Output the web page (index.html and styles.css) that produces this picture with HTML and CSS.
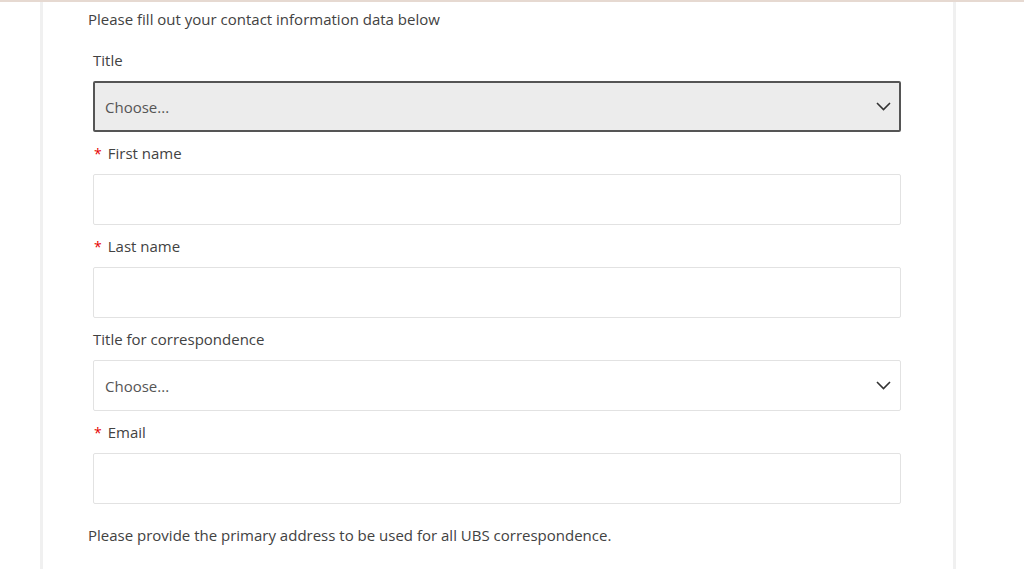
FILE: index.html
```html
<!DOCTYPE html>
<html lang="en">
<head>
<meta charset="utf-8">
<title>Contact information</title>
<link rel="stylesheet" href="styles.css">
</head>
<body>
<div class="topline"></div>
<main class="card">
  <p class="intro">Please fill out your contact information data below</p>
  <form class="form">
    <div class="group">
      <label class="label">Title</label>
      <div class="select select-active">
        <span class="select-text">Choose...</span>
        <svg class="chevron" width="15" height="9" viewBox="0 0 15 9"><path d="M1 1l6.5 6.5L14 1" fill="none" stroke="#333" stroke-width="1.6"/></svg>
      </div>
    </div>
    <div class="group">
      <label class="label"><span class="req">*</span>First name</label>
      <div class="input"></div>
    </div>
    <div class="group">
      <label class="label"><span class="req">*</span>Last name</label>
      <div class="input"></div>
    </div>
    <div class="group">
      <label class="label">Title for correspondence</label>
      <div class="select">
        <span class="select-text">Choose...</span>
        <svg class="chevron" width="15" height="9" viewBox="0 0 15 9"><path d="M1 1l6.5 6.5L14 1" fill="none" stroke="#333" stroke-width="1.6"/></svg>
      </div>
    </div>
    <div class="group">
      <label class="label"><span class="req">*</span>Email</label>
      <div class="input"></div>
    </div>
  </form>
  <p class="note">Please provide the primary address to be used for all UBS correspondence.</p>
</main>
</body>
</html>
```
FILE: styles.css
```css
html, body {
  margin: 0;
  padding: 0;
  background: #fff;
  height: 100%;
  overflow: hidden;
}
body {
  font-family: "Open Sans", "Noto Sans", sans-serif;
  font-size: 15px;
  color: #424242;
}
.topline {
  height: 2px;
  background: #e6d9d1;
}
.card {
  margin-left: 40px;
  width: 916px;
  height: 567px;
  border-left: 3px solid #f0f0f0;
  border-right: 3px solid #f0f0f0;
  padding: 6px 0 0 45px;
  box-sizing: border-box;
}
.intro, .note {
  margin: 0;
  line-height: 22px;
}
.form {
  margin: 19px 0 0 5px;
  width: 808px;
}
.group {
  margin-bottom: 10px;
}
.label {
  display: block;
  line-height: 22px;
  height: 22px;
  margin-bottom: 10px;
}
.req {
  color: #e60000;
  margin: 0 6px 0 1px;
  font-size: 14px;
}
.input, .select {
  height: 51px;
  box-sizing: border-box;
  border: 1px solid #e2e2e2;
  border-radius: 2px;
  background: #fff;
}
.select {
  display: flex;
  align-items: center;
  justify-content: space-between;
  padding: 0 9px 0 11px;
  color: #555;
}
.select-active {
  border: 2px solid #555;
  background: #ececec;
  padding: 0 8px 0 10px;
}
.chevron {
  display: block;
}
.note {
  margin-top: 20px;
}
```
